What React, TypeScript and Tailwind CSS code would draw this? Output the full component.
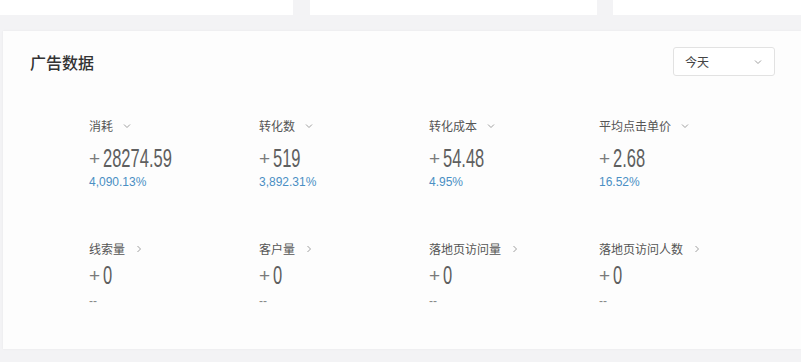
import React from 'react';

const cn = '"Noto Sans CJK SC", "Liberation Sans", sans-serif';

type Metric = {
  label: string;
  value: string;
  sub: string;
  arrow: 'down' | 'right';
};

const topMetrics: Metric[] = [
  { label: '消耗', value: '28274.59', sub: '4,090.13%', arrow: 'down' },
  { label: '转化数', value: '519', sub: '3,892.31%', arrow: 'down' },
  { label: '转化成本', value: '54.48', sub: '4.95%', arrow: 'down' },
  { label: '平均点击单价', value: '2.68', sub: '16.52%', arrow: 'down' },
];

const bottomMetrics: Metric[] = [
  { label: '线索量', value: '0', sub: '--', arrow: 'right' },
  { label: '客户量', value: '0', sub: '--', arrow: 'right' },
  { label: '落地页访问量', value: '0', sub: '--', arrow: 'right' },
  { label: '落地页访问人数', value: '0', sub: '--', arrow: 'right' },
];

const Chevron = ({ dir }: { dir: 'down' | 'right' }) => (
  <svg width="10" height="10" viewBox="0 0 10 10" className="text-[#a0a0a0]">
    {dir === 'down' ? (
      <path d="M2 3.5 L5 6.5 L8 3.5" fill="none" stroke="currentColor" strokeWidth="1" />
    ) : (
      <path d="M3.5 2 L6.5 5 L3.5 8" fill="none" stroke="currentColor" strokeWidth="1" />
    )}
  </svg>
);

const MetricCell = ({ m, top }: { m: Metric; top: boolean }) => (
  <div className="w-[170px]">
    <div className="flex items-center gap-[9px] h-[14px] text-[12px] text-[#555]" style={{ fontFamily: cn }}>
      <span>{m.label}</span>
      <Chevron dir={m.arrow} />
    </div>
    <div
      className={`flex items-center h-[30px] text-[#5f5f5f] whitespace-nowrap ${top ? 'mt-[10px]' : 'mt-[4px]'}`}
      style={{ fontFamily: '"Liberation Sans", sans-serif' }}
    >
      <span className="text-[19px] leading-[30px] font-light text-[#7a7a7a] mr-[3px] pt-[1px]">+</span>
      <span className="inline-block origin-left scale-x-[0.66] text-[25px] leading-[30px]">{m.value}</span>
    </div>
    <div
      className={`h-[16px] leading-[16px] text-[12px] ${top ? 'mt-[1px] text-[#4a8fc4]' : 'mt-[3px] text-[#888]'}`}
      style={{ fontFamily: '"Liberation Sans", sans-serif' }}
    >
      {m.sub}
    </div>
  </div>
);

export default function App() {
  return (
    <div className="w-[801px] h-[362px] bg-[#f3f3f5] overflow-hidden">
      {/* 顶部卡片 (被截断) */}
      <div className="flex h-[15px]">
        <div className="w-[293px] bg-white" />
        <div className="w-[287px] ml-[17px] bg-white" />
        <div className="flex-1 ml-[16px] bg-white" />
      </div>

      {/* 广告数据 */}
      <div className="mt-[16px] ml-[3px] h-[318px] bg-[#fdfdfd] shadow-[0_0_2px_rgba(0,0,0,0.06)]">
        <div className="flex items-center justify-between pl-[27px] pr-[26px] pt-[16px]">
          <h2 className="text-[16px] text-[#333] font-medium" style={{ fontFamily: cn }}>
            广告数据
          </h2>
          <div className="flex items-center justify-between w-[102px] h-[29px] px-[11px] border border-[#e2e2e2] rounded-[3px] bg-white">
            <span className="text-[12px] text-[#444]" style={{ fontFamily: cn }}>
              今天
            </span>
            <Chevron dir="down" />
          </div>
        </div>

        <div className="pl-[86px] mt-[43px]">
          <div className="flex">
            {topMetrics.map((m) => (
              <MetricCell key={m.label} m={m} top />
            ))}
          </div>
          <div className="flex mt-[52px]">
            {bottomMetrics.map((m) => (
              <MetricCell key={m.label} m={m} top={false} />
            ))}
          </div>
        </div>
      </div>
    </div>
  );
}
